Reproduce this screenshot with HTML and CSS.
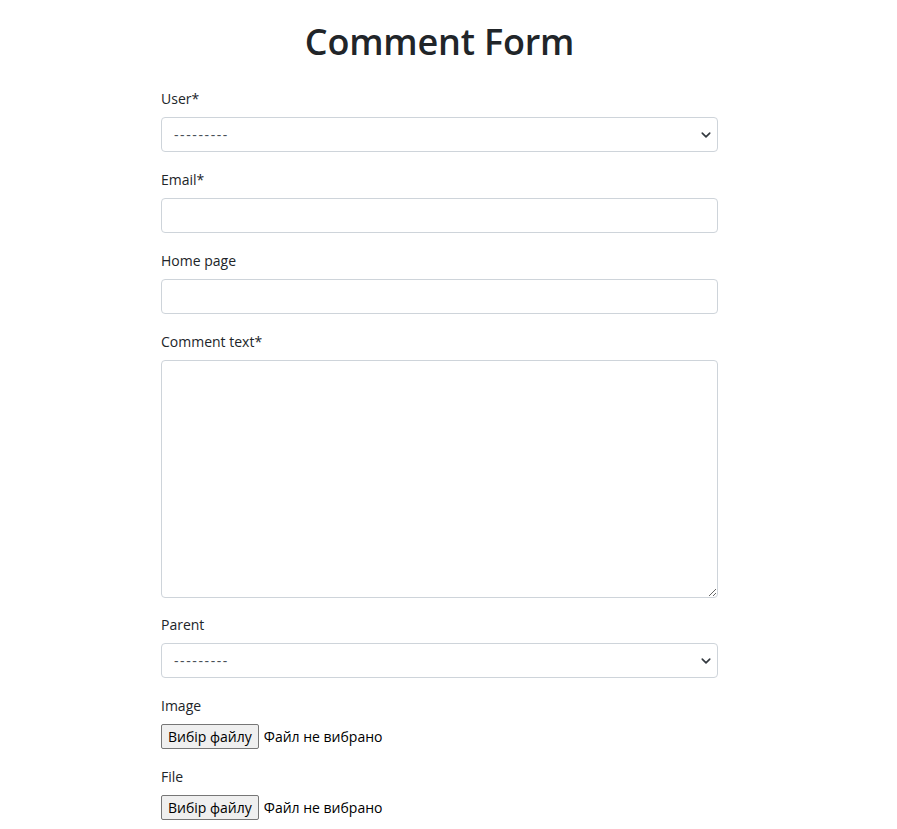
FILE: index.html
```html
<!DOCTYPE html>
<html lang="uk">
<head>
<meta charset="utf-8">
<title>Comment Form</title>
<link rel="stylesheet" href="styles.css">
</head>
<body>
<div class="page">
  <div class="container">
    <h1 class="title">Comment Form</h1>
    <form class="form">
      <div class="field">
        <label class="label" for="user">User*</label>
        <div class="select-wrap">
          <select id="user" class="control select"><option>---------</option></select>
          <svg class="chevron" viewBox="0 0 16 16" width="10" height="10"><path d="M2 5l6 6 6-6" fill="none" stroke="#343a40" stroke-width="2.6" stroke-linecap="round" stroke-linejoin="round"/></svg>
        </div>
      </div>
      <div class="field">
        <label class="label" for="email">Email*</label>
        <input id="email" class="control" type="text">
      </div>
      <div class="field">
        <label class="label" for="home">Home page</label>
        <input id="home" class="control" type="text">
      </div>
      <div class="field">
        <label class="label" for="text">Comment text*</label>
        <textarea id="text" class="control textarea"></textarea>
      </div>
      <div class="field field-tight">
        <label class="label" for="parent">Parent</label>
        <div class="select-wrap">
          <select id="parent" class="control select"><option>---------</option></select>
          <svg class="chevron" viewBox="0 0 16 16" width="10" height="10"><path d="M2 5l6 6 6-6" fill="none" stroke="#343a40" stroke-width="2.6" stroke-linecap="round" stroke-linejoin="round"/></svg>
        </div>
      </div>
      <div class="field">
        <span class="label">Image</span>
        <div class="file">
          <button type="button" class="file-btn">Вибір файлу</button>
          <span class="file-name">Файл не вибрано</span>
        </div>
      </div>
      <div class="field">
        <span class="label">File</span>
        <div class="file">
          <button type="button" class="file-btn">Вибір файлу</button>
          <span class="file-name">Файл не вибрано</span>
        </div>
      </div>
    </form>
  </div>
</div>
</body>
</html>
```

FILE: styles.css
```css
* { box-sizing: border-box; }
html, body { margin: 0; padding: 0; background: #fff; }
body {
  font-family: "Open Sans", "Noto Sans", "DejaVu Sans", sans-serif;
  color: #212529;
  font-size: 14px;
}
.page { width: 879px; }
.container { width: 557px; margin: 0 auto; }
.title {
  margin: 0;
  padding-top: 20px;
  height: 64px;
  line-height: 43px;
  font-size: 36px;
  font-weight: 600;
  text-align: center;
  letter-spacing: -0.2px;
}
.form { display: flex; flex-direction: column; gap: 17px; padding-top: 24px; }
.field { display: flex; flex-direction: column; }
.field-tight { margin-top: -1px; }
.label {
  display: block;
  height: 21px;
  line-height: 21px;
  margin-bottom: 8px;
  font-size: 14px;
}
.control {
  display: block;
  width: 100%;
  height: 35px;
  border: 1px solid #ced4da;
  border-radius: 4px;
  background: #fff;
  padding: 0 12px;
  font-family: inherit;
  font-size: 14px;
  color: #212529;
  outline: none;
}
.select {
  appearance: none;
  -webkit-appearance: none;
  padding-right: 32px;
  letter-spacing: 1.6px;
  color: #495057;
}
.select-wrap { position: relative; }
.chevron { position: absolute; right: 7px; top: 13px; pointer-events: none; }
.textarea { height: 238px; resize: vertical; padding: 6px 12px; }
.file { display: flex; align-items: center; gap: 5px; height: 25px; }
.file-btn {
  height: 25px;
  padding: 0 6px;
  background: #efefef;
  border: 1px solid #767676;
  border-radius: 2px;
  font-family: inherit;
  font-size: 14px;
  color: #000;
}
.file-name { font-size: 14px; color: #000; }
```
